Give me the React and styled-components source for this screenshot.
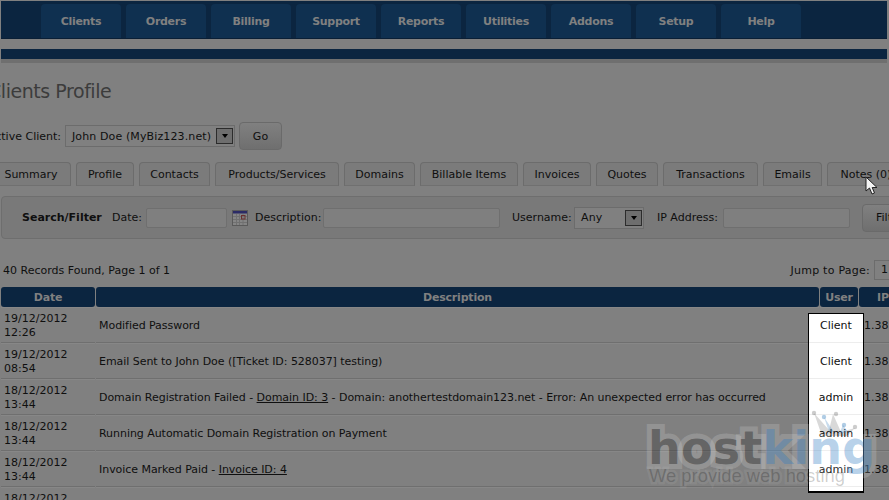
import React from "react";
import styled, { createGlobalStyle } from "styled-components";

const Global = createGlobalStyle`
  html, body { margin: 0; padding: 0; background: #808080; overflow: hidden; }
  * { box-sizing: border-box; }
`;
const Page = styled.div`
  position: relative; width: 889px; height: 500px; overflow: hidden; background: #808080;
  font-family: "DejaVu Sans", Tahoma, sans-serif; font-size: 11px; color: #0f0f0f;
`;
const Nav = styled.nav`
  display: flex; gap: 5px; margin: 1px 2px 0 1px; height: 38px; padding: 3px 0 0 40px;
  background: #0b2540; border-bottom: 1px solid #0a1f36;
`;
const NavTab = styled.div`
  width: 80px; height: 34px; display: flex; align-items: center; justify-content: center;
  background: #0f3050; border-radius: 4px 4px 0 0; color: #808080; font-weight: 700; font-size: 11px; letter-spacing: -0.3px;
`;
const SubBar = styled.div`
  margin: 10px 2px 0 1px; height: 14px; background: #0b2540; border-bottom: 4px solid #6f6f6f;
`;
const Content = styled.main`
  margin-left: -20px; width: 1000px;
`;
const Title = styled.h1`
  margin: 16px 0 0 8px; height: 24px; font-size: 19px; line-height: 24px; font-weight: 400; color: #3c3c3c;
  font-family: "DejaVu Sans", sans-serif; letter-spacing: -0.45px;
`;
const ClientRow = styled.div`
  display: flex; align-items: center; margin-top: 19px; height: 28px;
`;
const Label = styled.span`
  flex: none; width: ${p => p.$w}px; margin-left: ${p => p.$ml || 0}px; white-space: nowrap;
  text-align: ${p => p.$align || "left"}; font-weight: ${p => p.$bold ? 700 : 400};
`;
const SelectBox = styled.div`
  flex: none; position: relative; display: flex; align-items: center; width: ${p => p.$w}px; height: 22px;
  margin-left: ${p => p.$ml || 0}px; padding-left: 6px; border: 1px solid #6c6c6c; background: #808080; letter-spacing: 0.12px;
`;
const SelectArrow = styled.span`
  position: absolute; right: 1px; top: 2px; width: 17px; height: 16px; border: 1px solid #2c2c2c; background: #6e6e6e;
  display: flex; align-items: center; justify-content: center;
  &::after { content: ""; border: 3.5px solid transparent; border-top: 4px solid #000; border-bottom: 0; }
`;
const Btn = styled.div`
  flex: none; display: flex; align-items: center; justify-content: ${p => p.$left ? "flex-start" : "center"};
  padding-left: ${p => p.$left ? 13 : 0}px; width: ${p => p.$w}px; height: 28px; margin-left: ${p => p.$ml || 0}px;
  border: 1px solid #6a6a6a; border-radius: 4px; background: linear-gradient(#808080, #6f6f6f);
`;
const Tabs = styled.div`
  display: flex; gap: 5px; margin-top: 12px; padding-left: 11px; height: 24px;
`;
const Tab = styled.div`
  flex: none; width: ${p => p.$w}px; height: 24px; display: flex; align-items: center; justify-content: center;
  white-space: nowrap; border: 1px solid #6c6c6c; border-bottom-color: #707070; border-radius: 4px 4px 0 0; background: #7b7b7b;
`;
const FilterBox = styled.section`
  display: flex; align-items: center; margin: 10px 0 0 21px; height: 43px; padding-left: 20px;
  border: 1px solid #6e6e6e; border-radius: 4px; background: #797979;
`;
const TextInput = styled.div`
  flex: none; width: ${p => p.$w}px; height: 20px; margin-left: ${p => p.$ml || 0}px;
  border: 1px solid #6f6f6f; border-radius: 2px; background: #7f7f7f;
`;
const CalIcon = styled.svg`
  flex: none; margin-left: 5px; width: 16px; height: 16px;
`;
const RecordsRow = styled.div`
  display: flex; align-items: center; justify-content: space-between; margin-top: 21px; height: 20px;
  padding-left: 23px; width: 924px;
`;
const Jump = styled.div`
  display: flex; align-items: center; letter-spacing: 0.25px;
`;
const PageBox = styled.div`
  width: 30px; height: 20px; margin-left: 4px; padding-left: 6px; line-height: 18px; border: 1px solid #6c6c6c;
`;
const Table = styled.section`
  margin: 7px 0 0 21px;
`;
const Row = styled.div`
  display: grid; grid-template-columns: 94px 723px 38px 120px; column-gap: 1px;
  height: ${p => p.$head ? 20 : 36}px;
`;
const HeadCell = styled.div`
  display: flex; align-items: center; justify-content: ${p => p.$left ? "flex-start" : "center"};
  padding-left: ${p => p.$left ? 18 : 0}px; background: #0b2540; border-radius: 3px; color: #808080;
  font-weight: 700; white-space: nowrap; font-size: 11px; letter-spacing: -0.2px;
`;
const Cell = styled.div`
  display: flex; align-items: center; padding: 1px 0 0 ${p => p.$pad}px; line-height: 14px; white-space: nowrap;
  border-bottom: 1px solid #6f6f6f; border-top: 1px solid #878787;
`;
const Desc = styled.span`
  white-space: pre; letter-spacing: -0.045px;
`;
const Link = styled.span`
  text-decoration: underline;
`;
const Spotlight = styled.aside`
  position: absolute; left: 808px; top: 313px; width: 56px; height: 180px; background: #fff;
  border: 1px solid #000; border-bottom-width: 2px; overflow: hidden; color: #0f0f0f;
`;
const SpotRows = styled.div`
  margin-top: -7px;
`;
const SpotRow = styled.div`
  height: 36px; padding-top: 1px; display: flex; align-items: center; justify-content: center; border-bottom: 1px solid #ededed;
`;
const Watermark = styled.div`
  position: absolute; left: 646px; top: 405px; width: 240px; height: 95px; pointer-events: none;
`;
const Crown = styled.svg`
  position: absolute; left: 165px; top: 3px; width: 50px; height: 36px;
`;
const LogoWord = styled.div`
  position: absolute; left: 2px; top: 13px; font-family: "DejaVu Sans", sans-serif; font-weight: 700; font-size: 46px;
  line-height: 60px; letter-spacing: 0.2px; white-space: nowrap;
  -webkit-text-stroke: 10px rgba(255,255,255,.17); paint-order: stroke fill;
`;
const Host = styled.span`
  color: rgba(0,0,0,.33);
`;
const King = styled.span`
  color: rgba(50,125,195,.36);
`;
const Tagline = styled.div`
  position: absolute; left: 3px; top: 59px; font-family: "Liberation Sans", Arial, sans-serif; font-size: 18.4px;
  line-height: 24px; white-space: nowrap; color: rgba(0,0,0,.2);
  -webkit-text-stroke: 5px rgba(255,255,255,.08); paint-order: stroke fill;
`;
const Cursor = styled.svg`
  position: absolute; left: 865px; top: 176px; width: 14px; height: 20px;
`;

const navItems = ["Clients", "Orders", "Billing", "Support", "Reports", "Utilities", "Addons", "Setup", "Help"];
const tabs = [["Summary", 80], ["Profile", 58], ["Contacts", 71], ["Products/Services", 124], ["Domains", 71], ["Billable Items", 98], ["Invoices", 68], ["Quotes", 62], ["Transactions", 95], ["Emails", 59], ["Notes (0)", 78]];
const rows = [
  ["19/12/2012", "12:26", "Modified Password", "Client"],
  ["19/12/2012", "08:54", "Email Sent to John Doe ([Ticket ID: 528037] testing)", "Client"],
  ["18/12/2012", "13:44", <>Domain Registration Failed - <Link>Domain ID: 3</Link> - Domain: anothertestdomain123.net - Error: An unexpected error has occurred</>, "admin"],
  ["18/12/2012", "13:44", "Running Automatic Domain Registration on Payment", "admin"],
  ["18/12/2012", "13:44", <>Invoice Marked Paid - <Link>Invoice ID: 4</Link></>, "admin"],
  ["18/12/2012", "13:44", "", ""],
];

export default function App() {
  return (
    <Page>
      <Global />
      <Nav>{navItems.map(n => <NavTab key={n}>{n}</NavTab>)}</Nav>
      <SubBar />
      <Content>
        <Title>Clients Profile</Title>
        <ClientRow>
          <Label $w={81} $align="right">Active Client:</Label>
          <SelectBox $w={170} $ml={4}>John Doe (MyBiz123.net)<SelectArrow /></SelectBox>
          <Btn $w={43} $ml={4}>Go</Btn>
        </ClientRow>
        <Tabs>{tabs.map(([t, w]) => <Tab key={t} $w={w}>{t}</Tab>)}</Tabs>
        <FilterBox>
          <Label $w={78} $bold>Search/Filter</Label>
          <Label $w={30} $ml={12}>Date:</Label>
          <TextInput $w={81} $ml={4} />
          <CalIcon viewBox="0 0 16 16">
            <rect x="0.5" y="0.5" width="15" height="15" fill="#858585" stroke="#5a5a5a" />
            <rect x="1" y="1" width="14" height="2.5" fill="#2b2b66" />
            <path d="M1 6.5h14M1 9.5h14M1 12.5h14M4.5 4v11M7.5 4v11M11 4v11" stroke="#707070" />
            <rect x="9.5" y="5.5" width="3.5" height="3.5" fill="none" stroke="#6a3030" />
          </CalIcon>
          <Label $w={64} $ml={7}>Description:</Label>
          <TextInput $w={177} $ml={4} />
          <Label $w={58} $ml={12}>Username:</Label>
          <SelectBox $w={70} $ml={4}>Any<SelectArrow /></SelectBox>
          <Label $w={62} $ml={13}>IP Address:</Label>
          <TextInput $w={127} $ml={4} />
          <Btn $w={60} $ml={12} $left>Filter</Btn>
        </FilterBox>
        <RecordsRow>
          <span>40 Records Found, Page 1 of 1</span>
          <Jump>Jump to Page:<PageBox>1</PageBox></Jump>
        </RecordsRow>
        <Table>
          <Row $head>
            <HeadCell>Date</HeadCell>
            <HeadCell>Description</HeadCell>
            <HeadCell>User</HeadCell>
            <HeadCell $left>IP Address</HeadCell>
          </Row>
          {rows.map((r, i) => (
            <Row key={i}>
              <Cell $pad={3}><span>{r[0]}<br />{r[1]}</span></Cell>
              <Cell $pad={3}><Desc>{r[2]}</Desc></Cell>
              <Cell $pad={0} />
              <Cell $pad={5}>{r[3] ? "1.38.104.7" : ""}</Cell>
            </Row>
          ))}
        </Table>
      </Content>
      <Spotlight>
        <SpotRows>{rows.slice(0, 5).map((r, i) => <SpotRow key={i}>{r[3]}</SpotRow>)}</SpotRows>
      </Spotlight>
      <Watermark>
        <Crown viewBox="0 0 50 36">
          <path d="M3 5 L11 28 L36 28 L44 20 L30 24 L22 6 L18 22 Z" fill="rgba(0,0,0,.15)" />
          <path d="M13 9 L18 24 L23 24 Z M32 17 L28 26 L37 24 Z" fill="rgba(60,130,190,.28)" />
          <circle cx="3" cy="5" r="2.2" fill="rgba(0,0,0,.2)" />
          <circle cx="13" cy="9" r="2.2" fill="rgba(60,130,190,.4)" />
          <circle cx="25" cy="6" r="2.2" fill="rgba(0,0,0,.2)" />
          <circle cx="33" cy="17" r="2.2" fill="rgba(60,130,190,.4)" />
          <circle cx="44" cy="19" r="2.2" fill="rgba(0,0,0,.2)" />
        </Crown>
        <LogoWord><Host>host</Host><King>king</King></LogoWord>
        <Tagline>We provide web hosting</Tagline>
      </Watermark>
      <Cursor viewBox="0 0 14 20">
        <path d="M1 1 L1 15 L4.5 12 L7 18 L9.5 17 L7.2 11.5 L12 11.5 Z" fill="#f4f4f4" stroke="#222" strokeWidth="1" />
      </Cursor>
    </Page>
  );
}
